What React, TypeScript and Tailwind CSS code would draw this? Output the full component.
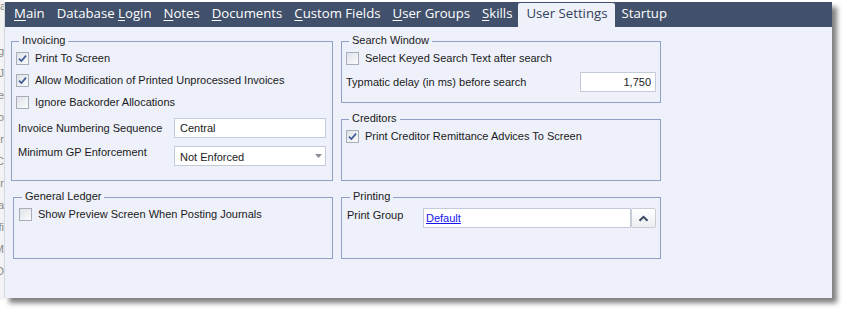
import React from "react"

const tabs = [
    { label: "Main", key: "M" },
    { label: "Database Login", key: "L" },
    { label: "Notes", key: "N" },
    { label: "Documents", key: "D" },
    { label: "Custom Fields", key: "C" },
    { label: "User Groups", key: "U" },
    { label: "Skills", key: "S" },
    { label: "User Settings", key: "", active: true },
    { label: "Startup", key: "" },
]

const behind = ["g", "J", "e", "o", "r", "C", "ir", "a", "fi", "M", "D"]

function Mnemonic({ label, k }: { label: string; k: string }) {
    if (!k) return <span>{label}</span>
    const i = label.indexOf(k)
    return (
        <span className="whitespace-pre">
            {label.slice(0, i)}
            <span className="underline underline-offset-2">{label[i]}</span>
            {label.slice(i + 1)}
        </span>
    )
}

function CheckBox({ checked }: { checked?: boolean }) {
    return (
        <span className="flex h-[13px] w-[13px] shrink-0 items-center justify-center border border-[#a7aebb] bg-linear-to-br from-[#dfe2e7] to-[#fbfbfc]">
            {checked && (
                <svg width="9" height="9" viewBox="0 0 9 9">
                    <path d="M1 4.6 L3.4 7 L8 1.6" fill="none" stroke="#3d5a96" strokeWidth="1.7" />
                </svg>
            )}
        </span>
    )
}

function CheckRow({ label, checked }: { label: string; checked?: boolean }) {
    return (
        <div className="flex h-[22px] items-center gap-[6px]">
            <CheckBox checked={checked} />
            <span>{label}</span>
        </div>
    )
}

function Group({ title, className, children }: { title: string; className?: string; children?: React.ReactNode }) {
    return (
        <div className={`flex flex-col border border-[#8fa2c5] ${className ?? ""}`}>
            <div className="-mt-[8px] ml-[3px] w-fit bg-[#eef1f9] px-[3px] leading-[13px]">{title}</div>
            {children}
        </div>
    )
}

export default function App() {
    return (
        <div className="flex h-[313px] w-[847px] bg-white text-[11px] leading-[13px] text-[#1a1a22]" style={{ fontFamily: '"Liberation Sans", Arial, sans-serif' }}>
            {/* window behind, cut off at the edge */}
            <div className="flex h-[300px] w-[4px] flex-col overflow-hidden bg-[#f3f3f3] text-[#8a8a8a]">
                <div className="h-[45px] text-right">ar</div>
                {behind.map((t, i) => (
                    <div key={i} className="flex h-[22px] justify-end whitespace-nowrap">{t}</div>
                ))}
            </div>

            {/* settings window */}
            <div className="mt-[2px] flex h-[296px] w-[828px] flex-col border-l border-[#d6d9df] bg-[#eef1f9] shadow-[5px_5px_5px_rgba(0,0,0,0.5)]">
                <div className="flex h-[25px] items-end bg-[#41506b] pl-[3px] text-[13.2px] text-white" style={{ fontFamily: '"Open Sans", "Noto Sans", sans-serif' }}>
                    {tabs.map((t) =>
                        t.active ? (
                            <div key={t.label} className="flex h-[24px] items-center rounded-t-[2px] bg-[#eef1f9] px-[8px] pb-[3px] text-[#33405a]">
                                {t.label}
                            </div>
                        ) : (
                            <div key={t.label} className="flex h-[25px] items-center px-[6px] pb-[2px]">
                                <Mnemonic label={t.label} k={t.key} />
                            </div>
                        )
                    )}
                </div>

                <div className="grid grid-cols-[322px_320px] gap-x-[8px] gap-y-[16px] pl-[6px] pt-[14px]">
                    <Group title="Invoicing" className="h-[140px] pl-[4px]">
                        <CheckRow label="Print To Screen" checked />
                        <CheckRow label="Allow Modification of Printed Unprocessed Invoices" checked />
                        <CheckRow label="Ignore Backorder Allocations" />
                        <div className="mt-[5px] flex h-[20px] items-center">
                            <span className="w-[158px] pl-[2px]">Invoice Numbering Sequence</span>
                            <div className="flex h-[20px] w-[152px] items-center border border-[#c3cbda] bg-white px-[5px]">Central</div>
                        </div>
                        <div className="mt-[8px] flex items-start">
                            <span className="w-[158px] pl-[2px]">Minimum GP Enforcement</span>
                            <div className="flex h-[20px] w-[152px] items-center justify-between border border-[#c3cbda] bg-white pl-[5px] pr-[3px]">
                                <span className="pt-[3px]">Not Enforced</span>
                                <svg width="7" height="4" viewBox="0 0 7 4">
                                    <path d="M0 0 H7 L3.5 4 Z" fill="#8a8e96" />
                                </svg>
                            </div>
                        </div>
                    </Group>

                    <div className="flex flex-col gap-[16px]">
                        <Group title="Search Window" className="h-[62px] pl-[4px]">
                            <CheckRow label="Select Keyed Search Text after search" />
                            <div className="mt-[3px] flex h-[20px] items-center justify-between pr-[4px]">
                                <span>Typmatic delay (in ms) before search</span>
                                <div className="flex h-[20px] w-[76px] items-center justify-end border border-[#c3cbda] bg-white pr-[4px]">1,750</div>
                            </div>
                        </Group>
                        <Group title="Creditors" className="h-[62px] pl-[4px]">
                            <CheckRow label="Print Creditor Remittance Advices To Screen" checked />
                        </Group>
                    </div>

                    <Group title="General Ledger" className="ml-[2px] h-[62px] pl-[5px]">
                        <CheckRow label="Show Preview Screen When Posting Journals" />
                    </Group>

                    <Group title="Printing" className="h-[62px] pl-[5px]">
                        <div className="mt-[5px] flex items-start">
                            <span className="w-[76px] pt-[1px]">Print Group</span>
                            <div className="flex h-[20px] w-[208px] items-center border border-[#c3cbda] bg-white px-[2px]">
                                <span className="text-[#1515f0] underline">Default</span>
                            </div>
                            <button className="flex h-[20px] w-[25px] items-center justify-center rounded-[2px] border border-[#c9ced6] bg-linear-to-b from-white to-[#eceef2]">
                                <svg width="11" height="7" viewBox="0 0 11 7">
                                    <path d="M1.5 5.8 L5.5 1.8 L9.5 5.8" fill="none" stroke="#3a4761" strokeWidth="2" />
                                </svg>
                            </button>
                        </div>
                    </Group>
                </div>
            </div>
        </div>
    )
}
